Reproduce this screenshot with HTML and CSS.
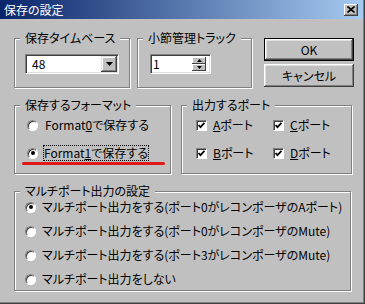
FILE: index.html
```html
<!DOCTYPE html>
<html lang="ja">
<head>
<meta charset="utf-8">
<title>保存の設定</title>
<link rel="stylesheet" href="styles.css">
</head>
<body>
<div class="window">
  <div class="titlebar">
    <span class="title">保存の設定</span>
    <span class="close"><svg width="8" height="7" viewBox="0 0 8 7"><path d="M0.5 0.5 L7.5 6.5 M7.5 0.5 L0.5 6.5" stroke="#000" stroke-width="1.6" fill="none"/></svg></span>
  </div>
  <div class="client">
    <div class="row row1">
      <fieldset class="group g-timebase">
        <legend>保存タイムベース</legend>
        <div class="body body-timebase">
          <div class="combo">
            <span class="combo-value">48</span>
            <span class="drop"><svg width="7" height="4" viewBox="0 0 7 4"><path d="M0 0 H7 L3.5 4 Z" fill="#000"/></svg></span>
          </div>
        </div>
      </fieldset>
      <fieldset class="group g-track">
        <legend>小節管理トラック</legend>
        <div class="body body-track">
          <div class="spin">
            <span class="spin-value">1</span>
            <span class="spin-btns">
              <span class="spin-btn"><svg width="5" height="3" viewBox="0 0 5 3"><path d="M2.5 0 L5 3 H0 Z" fill="#000"/></svg></span>
              <span class="spin-btn"><svg width="5" height="3" viewBox="0 0 5 3"><path d="M0 0 H5 L2.5 3 Z" fill="#000"/></svg></span>
            </span>
          </div>
        </div>
      </fieldset>
      <div class="buttons">
        <button class="btn btn-default">OK</button>
        <button class="btn">キャンセル</button>
      </div>
    </div>
    <div class="row row2">
      <fieldset class="group g-format">
        <legend>保存するフォーマット</legend>
        <div class="body body-format">
          <div class="opt"><span class="radio"></span><span class="lbl">Format<u>0</u>で保存する</span></div>
          <div class="opt"><span class="radio checked"></span><span class="lbl focus">Format<u>1</u>で保存する</span></div>
          <div class="redline"></div>
        </div>
      </fieldset>
      <fieldset class="group g-port">
        <legend>出力するポート</legend>
        <div class="body body-port">
          <div class="opt"><span class="check"><svg width="7" height="7" viewBox="0 0 7 7"><path d="M0.5 3 L2.5 5.2 L6.5 0.8" stroke="#000" stroke-width="1.8" fill="none"/></svg></span><span class="lbl"><u>A</u>ポート</span></div>
          <div class="opt"><span class="check"><svg width="7" height="7" viewBox="0 0 7 7"><path d="M0.5 3 L2.5 5.2 L6.5 0.8" stroke="#000" stroke-width="1.8" fill="none"/></svg></span><span class="lbl"><u>C</u>ポート</span></div>
          <div class="opt"><span class="check"><svg width="7" height="7" viewBox="0 0 7 7"><path d="M0.5 3 L2.5 5.2 L6.5 0.8" stroke="#000" stroke-width="1.8" fill="none"/></svg></span><span class="lbl"><u>B</u>ポート</span></div>
          <div class="opt"><span class="check"><svg width="7" height="7" viewBox="0 0 7 7"><path d="M0.5 3 L2.5 5.2 L6.5 0.8" stroke="#000" stroke-width="1.8" fill="none"/></svg></span><span class="lbl"><u>D</u>ポート</span></div>
        </div>
      </fieldset>
    </div>
    <fieldset class="group g-multi">
      <legend>マルチポート出力の設定</legend>
      <div class="body body-multi">
        <div class="opt"><span class="radio checked"></span><span class="lbl">マルチポート出力をする(ポート0がレコンポーザのAポート)</span></div>
        <div class="opt"><span class="radio"></span><span class="lbl">マルチポート出力をする(ポート0がレコンポーザのMute)</span></div>
        <div class="opt"><span class="radio"></span><span class="lbl">マルチポート出力をする(ポート3がレコンポーザのMute)</span></div>
        <div class="opt"><span class="radio"></span><span class="lbl">マルチポート出力をしない</span></div>
      </div>
    </fieldset>
  </div>
</div>
</body>
</html>
```
FILE: styles.css
```css
html, body {
  margin: 0;
  padding: 0;
  background: #c0c0c0;
}
body {
  font-family: "Noto Sans CJK JP", "Noto Sans", sans-serif;
  font-size: 12px;
  font-feature-settings: "palt";
  color: #000;
}
.window {
  width: 365px;
  height: 304px;
  box-sizing: border-box;
  border-right: 1px solid #404040;
  border-bottom: 1px solid #404040;
  box-shadow: inset -1px -1px #808080;
  overflow: hidden;
}
.titlebar {
  height: 19px;
  margin-right: 1px;
  display: flex;
  align-items: center;
  justify-content: space-between;
  padding: 0 5px 0 4px;
  background: linear-gradient(90deg, #0a246a, #a6caf0);
  color: #fff;
  line-height: 19px;
}
.title {
  font-size: 12px;
}
.close {
  width: 14px;
  height: 12px;
  box-sizing: border-box;
  background: #c0c0c0;
  box-shadow: inset -1px -1px #404040, inset 1px 1px #fff, inset -2px -2px #808080;
  display: flex;
  align-items: center;
  justify-content: center;
}
.client {
  padding: 12px 0 0 14px;
}
.row {
  display: flex;
  align-items: flex-start;
}
.group {
  margin: 0;
  padding: 0;
  border: 1px solid #808080;
  box-shadow: inset 1px 1px #fff, 1px 1px #fff;
  min-width: 0;
  box-sizing: border-box;
}
.group legend {
  margin-left: 5px;
  padding: 0 5px;
  line-height: 14px;
  height: 14px;
  background: #c0c0c0;
}
.g-timebase { width: 116px; }
.g-track { width: 115px; margin-left: 7px; }
.body-timebase { padding: 9px 0 13px 10px; }
.body-track { padding: 9px 0 13px 12px; }

.combo, .spin {
  display: flex;
  align-items: center;
  height: 20px;
  box-sizing: border-box;
  padding: 1px;
  border: 1px solid;
  border-color: #808080 #fff #fff #808080;
  box-shadow: inset 1px 1px #404040, inset -1px -1px #dfdfdf;
  background: #fff;
}
.combo { width: 94px; }
.combo-value { flex: 1; padding-left: 5px; line-height: 16px; }
.drop {
  width: 16px;
  height: 16px;
  box-sizing: border-box;
  background: #c0c0c0;
  box-shadow: inset -1px -1px #404040, inset 1px 1px #dfdfdf, inset -2px -2px #808080, inset 2px 2px #fff;
  display: flex;
  align-items: center;
  justify-content: center;
}
.spin { width: 61px; }
.spin-value { flex: 1; padding-left: 1px; line-height: 16px; }
.spin-btns {
  display: flex;
  flex-direction: column;
  margin-right: 3px;
}
.spin-btn {
  width: 14px;
  height: 7px;
  box-sizing: border-box;
  background: #c0c0c0;
  box-shadow: inset -1px -1px #404040, inset 1px 1px #fff;
  display: flex;
  align-items: center;
  justify-content: center;
}
.buttons {
  margin-left: 12px;
  margin-top: 7px;
  display: flex;
  flex-direction: column;
  gap: 3px;
}
.btn {
  width: 90px;
  height: 23px;
  box-sizing: border-box;
  margin: 0;
  padding: 0;
  font: inherit;
  color: #000;
  border: none;
  background: #c0c0c0;
  box-shadow: inset -1px -1px #404040, inset 1px 1px #fff, inset -2px -2px #808080, inset 2px 2px #dfdfdf;
}
.btn-default {
  border: 1px solid #000;
}

.row2 { margin-top: 10px; }
.g-format { width: 157px; }
.g-port { width: 171px; margin-left: 10px; }
.body {
  position: relative;
}
.body-format {
  padding: 5px 0 12px 12px;
  display: flex;
  flex-direction: column;
  gap: 12px;
}
.body-port {
  padding: 5px 0 12px 14px;
  display: grid;
  grid-template-columns: 77px auto;
  row-gap: 12px;
}
.opt {
  display: flex;
  align-items: center;
  height: 16px;
  line-height: 16px;
  white-space: nowrap;
}
.radio {
  width: 11px;
  height: 11px;
  box-sizing: border-box;
  border-radius: 50%;
  border: 1px solid;
  border-color: #808080 #fff #fff #808080;
  box-shadow: inset 1px 1px #404040;
  background: #fff;
  display: flex;
  align-items: center;
  justify-content: center;
  flex: none;
}
.radio.checked::after {
  content: "";
  width: 4px;
  height: 4px;
  border-radius: 50%;
  background: #000;
}
.body-format .radio { margin-right: 7px; }
.lbl.focus {
  outline: 1px dotted #000;
  outline-offset: -1px;
  padding: 0 1px;
  margin-left: -2px;
}
.check {
  width: 11px;
  height: 11px;
  box-sizing: border-box;
  border: 1px solid;
  border-color: #808080 #fff #fff #808080;
  box-shadow: inset 1px 1px #404040;
  background: #fff;
  display: flex;
  align-items: center;
  justify-content: center;
  margin-right: 6px;
  flex: none;
}
.redline {
  position: absolute;
  left: 7px;
  top: 50px;
  width: 143px;
  height: 3px;
  border-radius: 2px;
  background: #e01818;
}
.g-multi {
  width: 337px;
  margin-top: 10px;
}
.body-multi {
  padding: 1px 0 3px 10px;
  display: flex;
  flex-direction: column;
  gap: 8px;
}
.body-multi .radio { margin-right: 6px; }
```
